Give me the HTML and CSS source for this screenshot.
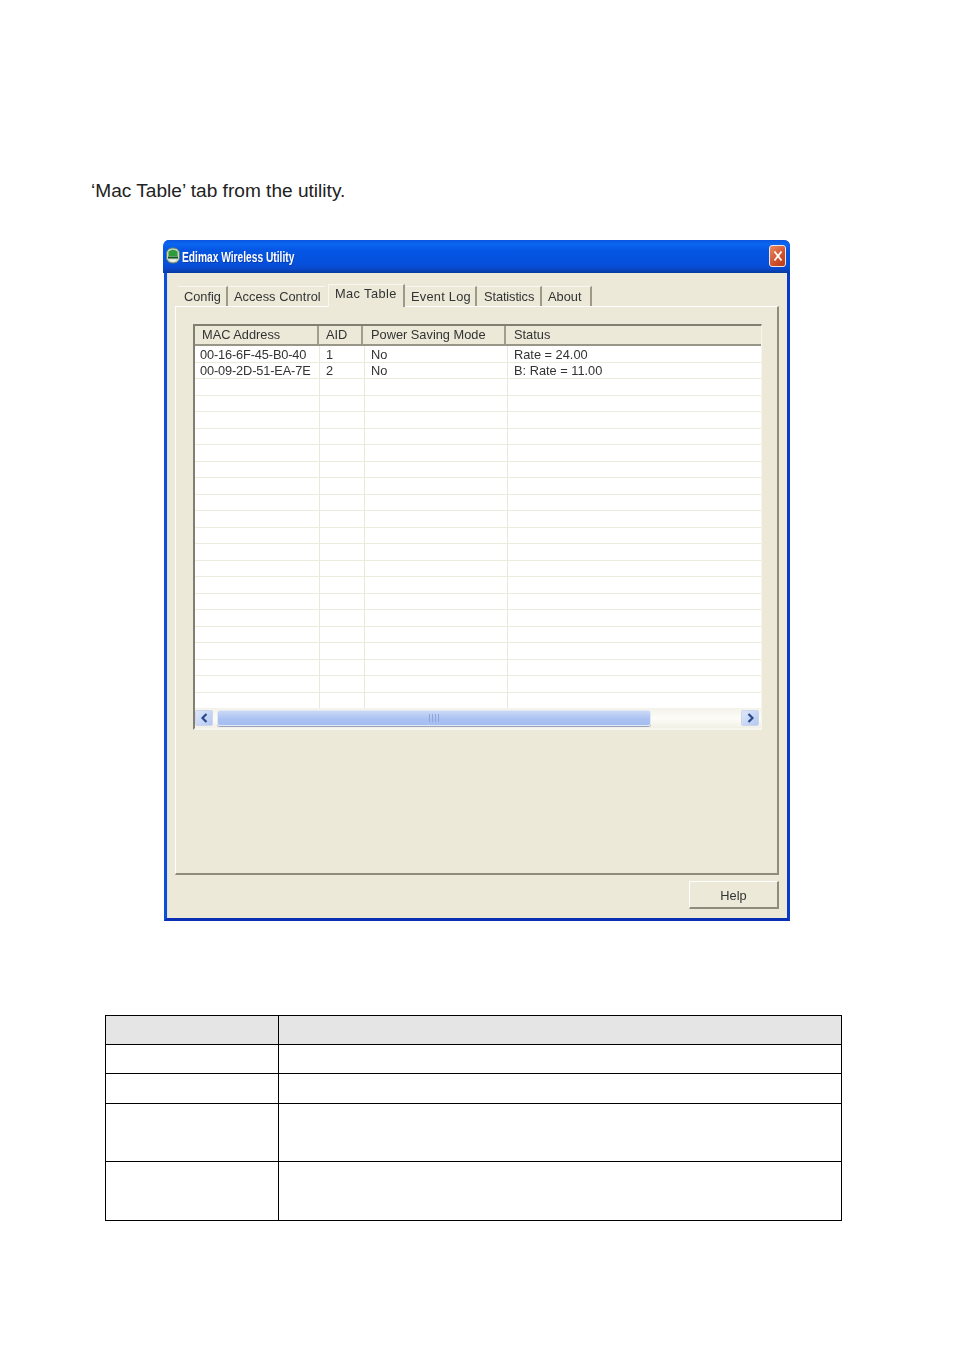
FILE: index.html
```html
<!DOCTYPE html>
<html lang="en">
<head>
<meta charset="utf-8">
<title>Mac Table</title>
<link rel="stylesheet" href="styles.css">
</head>
<body>
<p class="intro">‘Mac Table’ tab from the utility.</p>
<section class="window">
  <header class="titlebar">
    <svg class="app-icon" width="14" height="17" viewBox="0 0 14 17"><rect x="0.5" y="1" width="13" height="15" rx="5.5" fill="#c9d6c4" stroke="#5d7f66"/><path d="M2.5 4.5Q7 1 11.5 4.5V9H2.5Z" fill="#2f9a3c"/><rect x="2" y="9.5" width="10" height="2" fill="#0d5a22"/><path d="M3 12.5H11Q9 15 7 15T3 12.5Z" fill="#eef2ea"/></svg>
    <span class="title">Edimax Wireless Utility</span>
    <span class="close"><svg width="10" height="12" viewBox="0 0 10 12"><path d="M1.5 1.5L8.5 10.5M8.5 1.5L1.5 10.5" stroke="#fff" stroke-width="1.8" fill="none"/></svg></span>
  </header>
  <nav class="tabs">
    <span class="tab tab-config">Config</span>
    <span class="tab tab-access">Access Control</span>
    <span class="tab tab-active">Mac Table</span>
    <span class="tab tab-log">Event Log</span>
    <span class="tab tab-stats">Statistics</span>
    <span class="tab tab-about">About</span>
  </nav>
  <div class="panel">
    <div class="list">
      <div class="list-head">
        <span class="hc c1">MAC Address</span>
        <span class="hc c2">AID</span>
        <span class="hc c3">Power Saving Mode</span>
        <span class="hc c4">Status</span>
      </div>
      <div class="rows">
        <div class="row"><span class="c c1">00-16-6F-45-B0-40</span><span class="c c2">1</span><span class="c c3">No</span><span class="c c4">Rate = 24.00</span></div>
        <div class="row"><span class="c c1">00-09-2D-51-EA-7E</span><span class="c c2">2</span><span class="c c3">No</span><span class="c c4">B: Rate = 11.00</span></div>
        <div class="row"><span class="c c1"></span><span class="c c2"></span><span class="c c3"></span><span class="c c4"></span></div>
        <div class="row"><span class="c c1"></span><span class="c c2"></span><span class="c c3"></span><span class="c c4"></span></div>
        <div class="row"><span class="c c1"></span><span class="c c2"></span><span class="c c3"></span><span class="c c4"></span></div>
        <div class="row"><span class="c c1"></span><span class="c c2"></span><span class="c c3"></span><span class="c c4"></span></div>
        <div class="row"><span class="c c1"></span><span class="c c2"></span><span class="c c3"></span><span class="c c4"></span></div>
        <div class="row"><span class="c c1"></span><span class="c c2"></span><span class="c c3"></span><span class="c c4"></span></div>
        <div class="row"><span class="c c1"></span><span class="c c2"></span><span class="c c3"></span><span class="c c4"></span></div>
        <div class="row"><span class="c c1"></span><span class="c c2"></span><span class="c c3"></span><span class="c c4"></span></div>
        <div class="row"><span class="c c1"></span><span class="c c2"></span><span class="c c3"></span><span class="c c4"></span></div>
        <div class="row"><span class="c c1"></span><span class="c c2"></span><span class="c c3"></span><span class="c c4"></span></div>
        <div class="row"><span class="c c1"></span><span class="c c2"></span><span class="c c3"></span><span class="c c4"></span></div>
        <div class="row"><span class="c c1"></span><span class="c c2"></span><span class="c c3"></span><span class="c c4"></span></div>
        <div class="row"><span class="c c1"></span><span class="c c2"></span><span class="c c3"></span><span class="c c4"></span></div>
        <div class="row"><span class="c c1"></span><span class="c c2"></span><span class="c c3"></span><span class="c c4"></span></div>
        <div class="row"><span class="c c1"></span><span class="c c2"></span><span class="c c3"></span><span class="c c4"></span></div>
        <div class="row"><span class="c c1"></span><span class="c c2"></span><span class="c c3"></span><span class="c c4"></span></div>
        <div class="row"><span class="c c1"></span><span class="c c2"></span><span class="c c3"></span><span class="c c4"></span></div>
        <div class="row"><span class="c c1"></span><span class="c c2"></span><span class="c c3"></span><span class="c c4"></span></div>
        <div class="row"><span class="c c1"></span><span class="c c2"></span><span class="c c3"></span><span class="c c4"></span></div>
        <div class="row row-last"><span class="c c1"></span><span class="c c2"></span><span class="c c3"></span><span class="c c4"></span></div>
      </div>
      <div class="scrollbar">
        <span class="sb-btn"><svg width="9" height="10" viewBox="0 0 9 10"><path d="M6.5 1L2.5 5L6.5 9" stroke="#2b4a8c" stroke-width="2.2" fill="none"/></svg></span>
        <span class="sb-thumb"><svg width="12" height="8" viewBox="0 0 12 8"><path d="M1.5 0V8M4.5 0V8M7.5 0V8M10.5 0V8" stroke="#8ea6d8" stroke-width="1" fill="none"/></svg></span>
        <span class="sb-track"></span>
        <span class="sb-btn"><svg width="9" height="10" viewBox="0 0 9 10"><path d="M2.5 1L6.5 5L2.5 9" stroke="#2b4a8c" stroke-width="2.2" fill="none"/></svg></span>
      </div>
    </div>
  </div>
  <footer class="footer"><span class="help">Help</span></footer>
</section>
<table class="doc-table">
  <colgroup><col class="col-a"><col class="col-b"></colgroup>
  <tr class="r-head"><td></td><td></td></tr>
  <tr class="r-one"><td></td><td></td></tr>
  <tr class="r-two"><td></td><td></td></tr>
  <tr class="r-three"><td></td><td></td></tr>
  <tr class="r-four"><td></td><td></td></tr>
</table>
</body>
</html>
```

FILE: styles.css
```css
* { box-sizing: border-box; }
html, body { margin: 0; padding: 0; background: #fff; }
body {
  width: 954px;
  height: 1350px;
  overflow: hidden;
  font-family: "Liberation Sans", Arial, sans-serif;
  color: #222;
  padding-top: 180px;
}
.intro {
  margin: 0 0 38px 91px;
  font-size: 19.1px;
  line-height: 22px;
}
.window {
  margin-left: 164px;
  width: 626px;
  height: 681px;
  background: #ece9d8;
  border-left: 3px solid #0d4fd6;
  border-right: 3px solid #0a3ac8;
  border-bottom: 3px solid #0a2fb5;
  border-top-left-radius: 5px;
  border-top-right-radius: 6px;
  box-shadow: inset 1px 0 0 #dfe3e6;
  filter: blur(0.35px);
  color: #333;
  font-size: 12.8px;
}
.titlebar {
  margin: 0 -3px 0 -4px;
  height: 33px;
  padding: 6px 4px 0 3px;
  display: flex;
  align-items: flex-start;
  border-radius: 6px 6px 0 0;
  background: linear-gradient(#0a55e0 0, #0a66f0 4px, #0556e4 10px, #0550dc 24px, #0a48c8 29px, #07389e 33px);
}
.app-icon { margin-top: 1px; flex: none; }
.title {
  margin: 3px 0 0 2px;
  font-weight: 700;
  font-size: 14.6px;
  line-height: 16px;
  color: #fff;
  flex: 1;
  transform: scaleX(0.7);
  transform-origin: left center;
  text-shadow: 1px 1px 0 #0a3aa8;
}
.close {
  width: 17px;
  height: 22px;
  margin-top: -1px;
  display: flex;
  align-items: center;
  justify-content: center;
  border: 1px solid #f0e8e0;
  border-radius: 3px;
  background: linear-gradient(135deg, #e88a62, #d0502a 60%, #b83a18);
}
.tabs {
  display: flex;
  align-items: flex-end;
  height: 22px;
  margin: 11px 0 0 11px;
  position: relative;
  z-index: 1;
}
.tab {
  height: 20px;
  line-height: 19px;
  white-space: nowrap;
  border-right: 2px solid #9d9a88;
  border-top: 1px solid #f8f7f0;
  padding-left: 6px;
  flex: none;
}
.tab-config { width: 50px; margin-right: 1px; }
.tab-access { width: 97px; padding-left: 5px; letter-spacing: 0.05px; border-right-color: transparent; }
.tab-active {
  width: 77px;
  height: 23px;
  margin: 0 1px 0 2px;
  padding-left: 6px;
  line-height: 18px;
  letter-spacing: 0.4px;
  background: #ece9d8;
  border-left: 1px solid #f8f7f0;
  margin-bottom: -1px;
}
.tab-log { width: 71px; padding-left: 5px; letter-spacing: 0.25px; margin-right: 1px; }
.tab-stats { width: 64px; padding-left: 6px; letter-spacing: -0.1px; margin-right: 1px; }
.tab-about { width: 49px; padding-left: 5px; }
.panel {
  height: 569px;
  margin: 0 8px;
  padding: 17px 0 0 17px;
  border-top: 1px solid #fff;
  border-left: 1px solid #fff;
  border-right: 2px solid #8e8c7c;
  border-bottom: 2px solid #8e8c7c;
}
.list {
  width: 569px;
  height: 406px;
  background: #fff;
  border-top: 2px solid #807f72;
  border-left: 2px solid #807f72;
  border-right: 1px solid #f7f6ee;
  border-bottom: 2px solid #f7f6ee;
}
.list-head {
  display: flex;
  height: 20px;
  background: #ece9d8;
  border-bottom: 2px solid #989686;
}
.hc {
  line-height: 18px;
  padding-left: 7px;
  border-right: 2px solid #a09e8e;
  white-space: nowrap;
}
.hc.c1 { width: 124px; }
.hc.c2 { width: 44px; }
.hc.c3 { width: 143px; padding-left: 8px; }
.hc.c4 { flex: 1; padding-left: 8px; border-right: 0; }
.rows { height: 362px; display: flex; flex-direction: column; }
.row {
  display: flex;
  flex: 1 1 0;
  min-height: 0;
  border-bottom: 1px solid #ecebdd;
}
.row:first-child .c { line-height: 17px; }
.row-last { border-bottom: 0; }
.c {
  line-height: 16px;
  padding-left: 5px;
  border-right: 1px solid #e9e8da;
  white-space: nowrap;
}
.c.c1 { width: 125px; letter-spacing: -0.15px; }
.c.c2 { width: 45px; padding-left: 6px; }
.c.c3 { width: 143px; padding-left: 6px; }
.c.c4 { flex: 1; padding-left: 6px; border-right: 0; }
.scrollbar {
  display: flex;
  align-items: center;
  height: 20px;
  padding: 0 2px 0 0;
  background: linear-gradient(#f3f2ea, #fdfdf8 50%, #f1f0e6);
}
.sb-btn {
  flex: none;
  width: 18px;
  height: 16px;
  display: flex;
  align-items: center;
  justify-content: center;
  border-radius: 2px;
  background: linear-gradient(135deg, #dfe8fa, #b4c8f0);
  border: 1px solid #ccd6ec;
}
.sb-thumb {
  flex: none;
  width: 434px;
  height: 16px;
  margin-left: 4px;
  display: flex;
  align-items: center;
  justify-content: center;
  border-radius: 3px;
  background: linear-gradient(#c9d8f6, #aac1f2 60%, #a5bdf0);
  border: 1px solid #e2e8f6;
  box-shadow: 0 1px 0 #9aa4bc;
}
.sb-track { flex: 1; }
.footer {
  display: flex;
  justify-content: flex-end;
  padding: 6px 8px 0 0;
}
.help {
  width: 90px;
  height: 28px;
  line-height: 27px;
  text-align: center;
  border-top: 1px solid #fff;
  border-left: 1px solid #fff;
  border-right: 2px solid #8e8c7c;
  border-bottom: 2px solid #8e8c7c;
}
.doc-table {
  margin: 94px 0 0 105px;
  width: 737px;
  border-collapse: collapse;
  table-layout: fixed;
}
.doc-table td { border: 1px solid #000; padding: 0; }
.col-a { width: 173px; }
.r-head td { background: #e5e5e5; }
.r-head { height: 29px; }
.r-one { height: 29px; }
.r-two { height: 30px; }
.r-three { height: 58px; }
.r-four { height: 59px; }
```
